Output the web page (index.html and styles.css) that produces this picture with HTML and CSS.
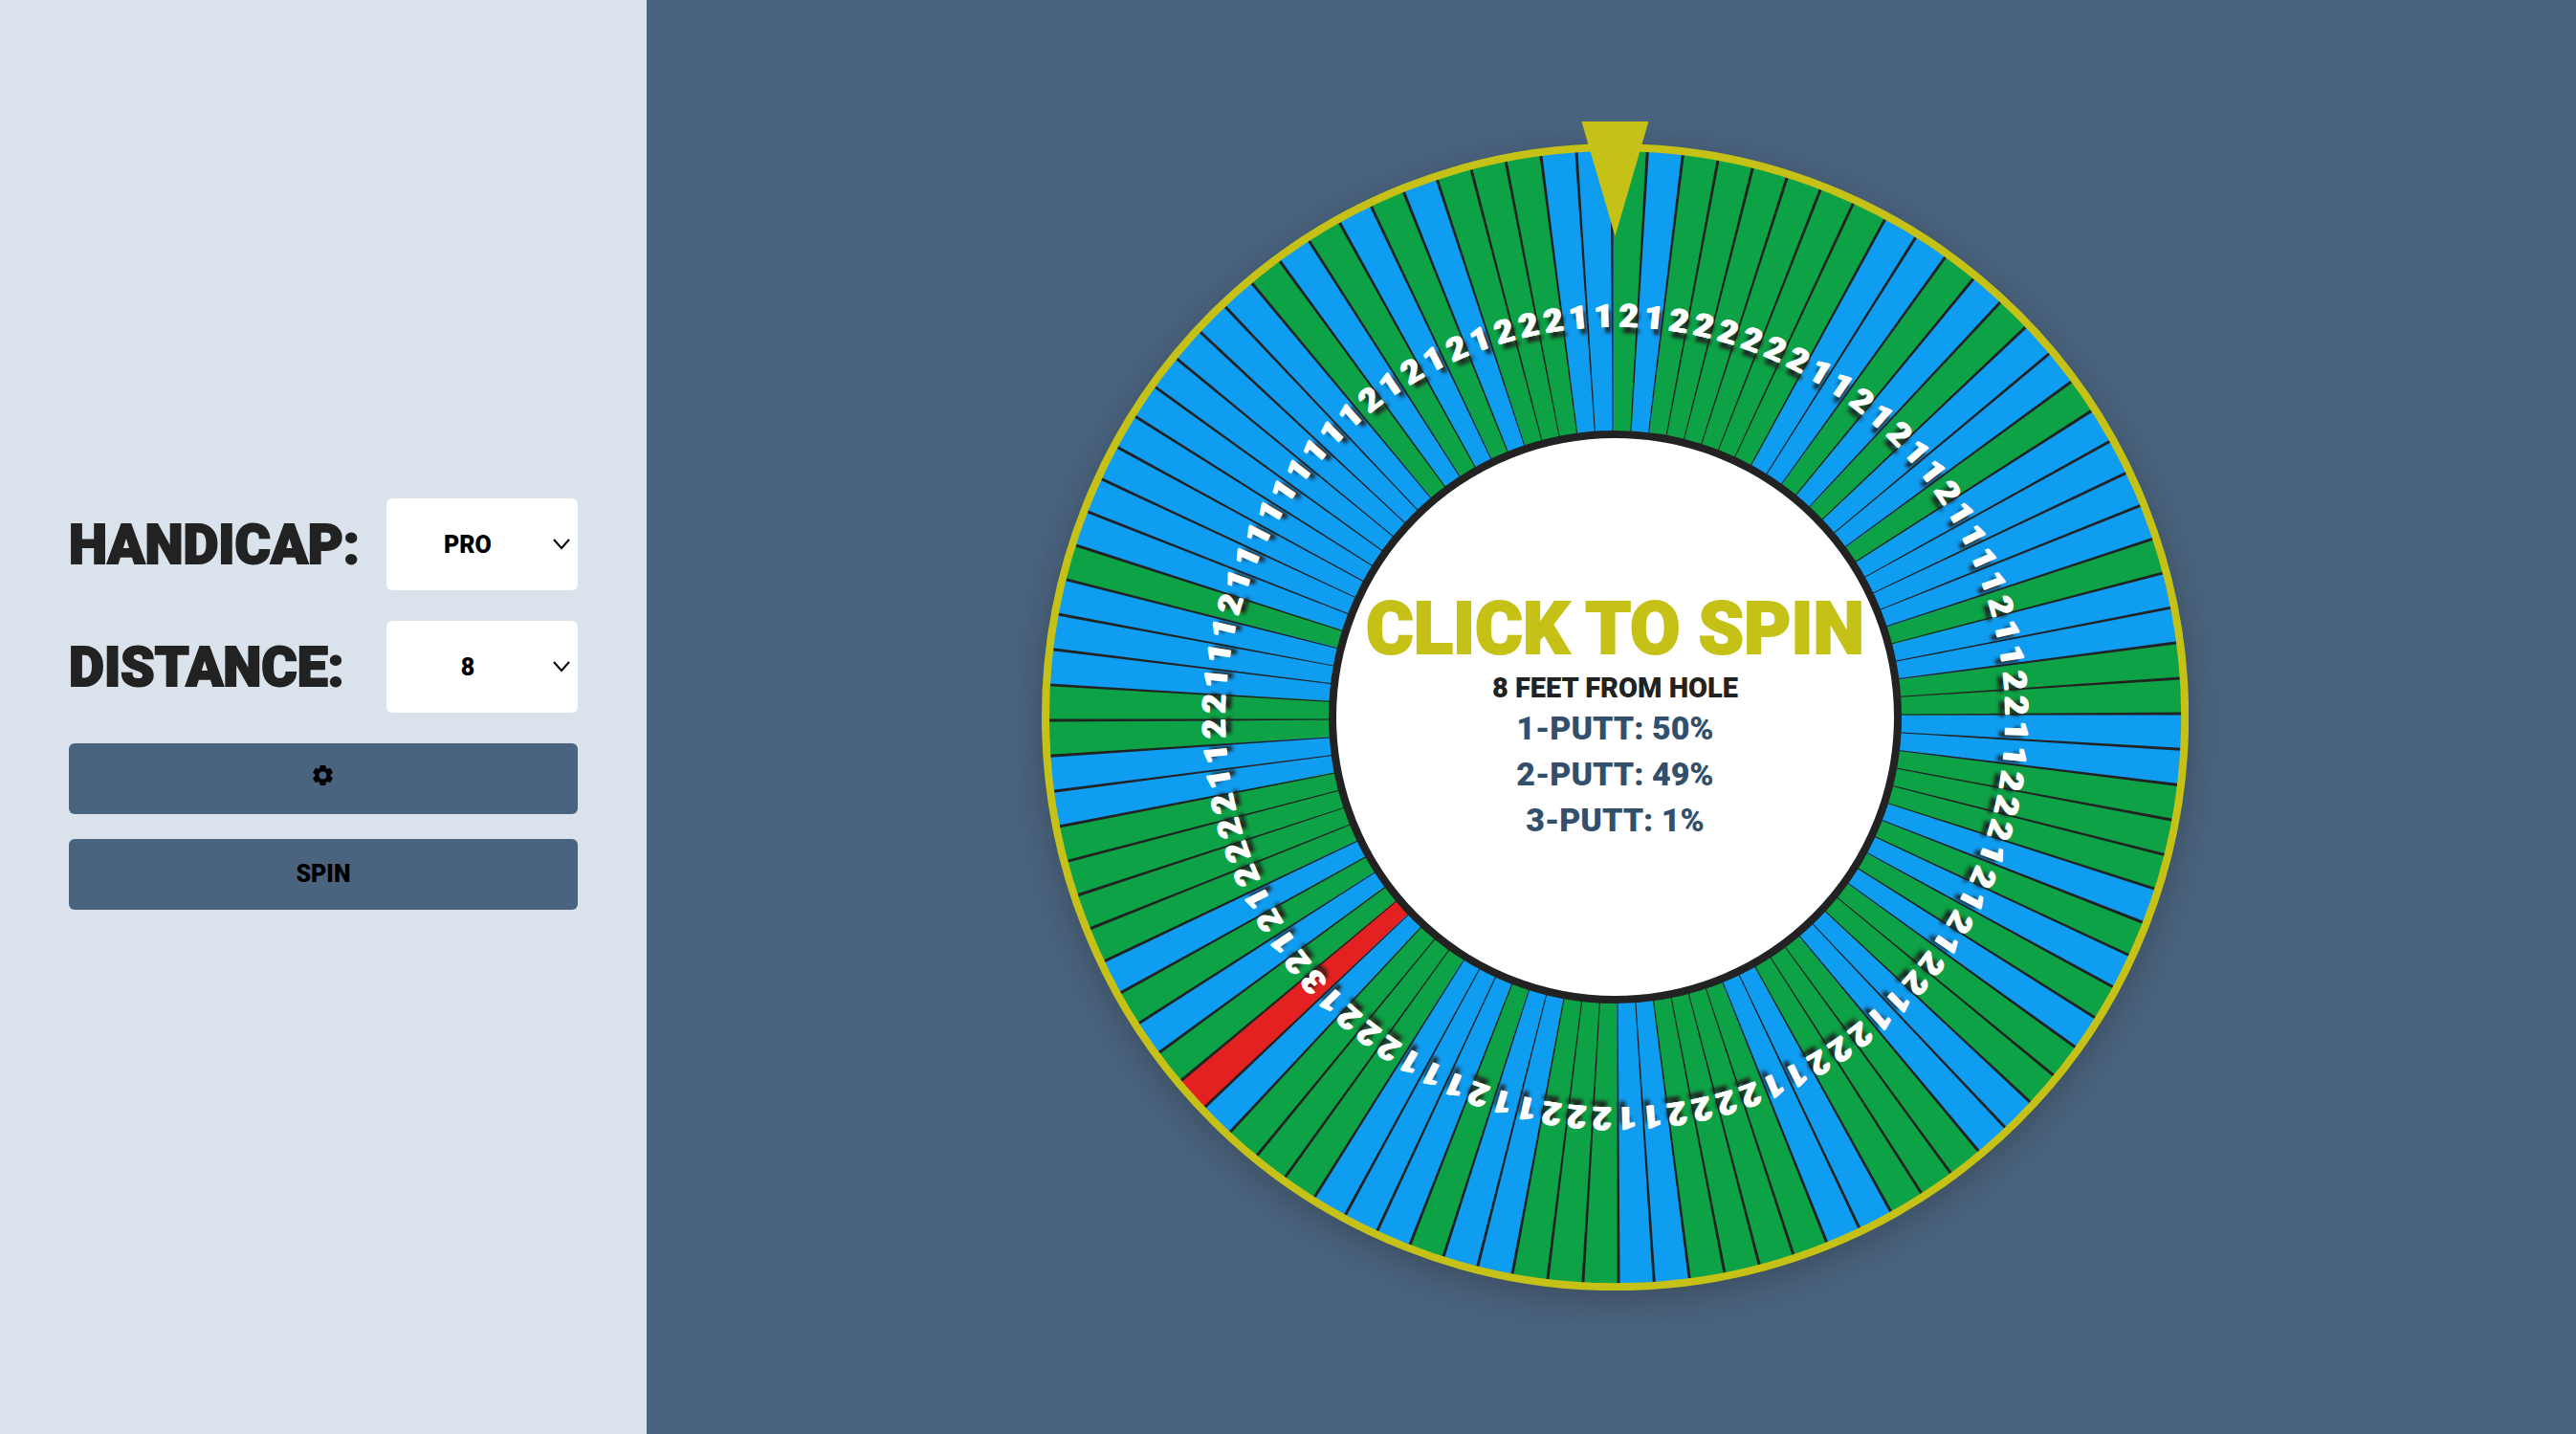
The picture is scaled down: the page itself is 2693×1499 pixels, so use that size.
FILE: index.html
```html
<!DOCTYPE html>
<html lang="en">
<head>
  <meta charset="utf-8">
  <meta name="viewport" content="width=device-width, initial-scale=1">
  <title>Putt Wheel</title>
  <link rel="stylesheet" href="styles.css">
</head>
<body>
  <div class="app">
    <aside class="sidebar">
      <form class="controls">
        <div class="field">
          <label class="field-label" for="handicap">HANDICAP:</label>
          <div class="select-box">
            <select class="select" id="handicap">
              <option selected>PRO</option>
              <option>SCRATCH</option>
            </select>
            <svg class="chevron" viewBox="0 0 18 12" aria-hidden="true"><path d="M1 1l8 9 8-9"/></svg>
          </div>
        </div>
        <div class="field">
          <label class="field-label" for="distance">DISTANCE:</label>
          <div class="select-box">
            <select class="select" id="distance">
              <option selected>8</option>
              <option>9</option>
            </select>
            <svg class="chevron" viewBox="0 0 18 12" aria-hidden="true"><path d="M1 1l8 9 8-9"/></svg>
          </div>
        </div>
        <div class="actions">
          <button class="action action-settings" type="button" aria-label="Settings">
            <svg class="gear" viewBox="0 0 24 24" aria-hidden="true"><path d="M19.14 12.94c.04-.3.06-.61.06-.94 0-.32-.02-.64-.07-.94l2.03-1.58a.49.49 0 0 0 .12-.61l-1.92-3.32a.488.488 0 0 0-.59-.22l-2.39.96c-.5-.38-1.03-.7-1.62-.94l-.36-2.54a.484.484 0 0 0-.48-.41h-3.84c-.24 0-.43.17-.47.41l-.36 2.54c-.59.24-1.13.57-1.62.94l-2.39-.96c-.22-.08-.47 0-.59.22L2.74 8.87c-.12.21-.08.47.12.61l2.03 1.58c-.05.3-.09.63-.09.94s.02.64.07.94l-2.03 1.58a.49.49 0 0 0-.12.61l1.92 3.32c.12.22.37.29.59.22l2.39-.96c.5.38 1.03.7 1.62.94l.36 2.54c.05.24.24.41.48.41h3.84c.24 0 .44-.17.47-.41l.36-2.54c.59-.24 1.13-.56 1.62-.94l2.39.96c.22.08.47 0 .59-.22l1.92-3.32c.12-.22.07-.47-.12-.61l-2.01-1.58zM12 16.3c-2.37 0-4.3-1.93-4.3-4.3s1.93-4.3 4.3-4.3 4.3 1.93 4.3 4.3-1.93 4.3-4.3 4.3z"/></svg>
          </button>
          <button class="action" type="button">SPIN</button>
        </div>
      </form>
    </aside>
    <main class="stage">
      <div class="wheel">
        <svg class="segments" id="segments" viewBox="-600 -600 1200 1200" role="img" aria-label="Putt wheel"></svg>
        <button class="hub" type="button">
          <span class="hub-title">CLICK TO SPIN</span>
          <span class="hub-distance">8 FEET FROM HOLE</span>
          <span class="hub-odds">1-PUTT: 50%</span>
          <span class="hub-odds">2-PUTT: 49%</span>
          <span class="hub-odds">3-PUTT: 1%</span>
        </button>
        <div class="pointer"></div>
      </div>
    </main>
  </div>
  <script src="wheel.js"></script>
</body>
</html>
```
FILE: styles.css
```css
:root {
  --gold: #c5c116;
  --slate: #4a647f;
  --ink: #222;
}

* {
  box-sizing: border-box;
}

body {
  margin: 0;
  font-family: Roboto, "Liberation Sans", sans-serif;
  font-weight: 900;
  color: var(--ink);
}

.app {
  display: flex;
  min-height: 100vh;
}

.sidebar {
  flex: 0 0 25.1%;
  display: flex;
  align-items: center;
  padding: 0 72px 28px;
  background: #dae2eb;
}

.controls {
  flex: 1;
  display: grid;
  gap: 32px;
}

.field {
  display: flex;
  align-items: center;
  justify-content: space-between;
}

.field-label {
  padding-top: 2px;
  font-size: 57px;
  line-height: 64px;
  -webkit-text-stroke: 2px currentColor;
}

.select-box {
  display: grid;
  align-items: center;
  width: 200px;
}

.select,
.chevron {
  grid-area: 1 / 1;
}

.select {
  appearance: none;
  width: 100%;
  height: 96px;
  padding: 2px 30px 0 0;
  border: 0;
  border-radius: 6px;
  background: #fff;
  color: #000;
  font: inherit;
  font-size: 25px;
  text-align: center;
  text-align-last: center;
}

.chevron {
  justify-self: end;
  width: 18px;
  height: 12px;
  margin-right: 8px;
  fill: none;
  stroke: #000;
  stroke-width: 2;
  pointer-events: none;
}

.actions {
  display: grid;
  gap: 26px;
}

.action {
  display: flex;
  align-items: center;
  justify-content: center;
  height: 74px;
  padding: 0;
  border: 0;
  border-radius: 6px;
  background: var(--slate);
  color: #000;
  font: inherit;
  font-size: 25px;
  cursor: pointer;
}

.action-settings {
  padding-bottom: 6px;
}

.gear {
  width: 25px;
  height: 25px;
  stroke: #000;
  stroke-width: 1;
}

.stage {
  flex: 1;
  display: flex;
  align-items: center;
  justify-content: center;
  padding-left: 8px;
  background: var(--slate);
}

.wheel {
  position: relative;
  display: grid;
  place-items: center;
  width: 80vh;
  height: 80vh;
  border-radius: 50%;
  box-shadow: 0 10px 40px rgba(34, 34, 34, 0.35);
}

.segments,
.hub {
  grid-area: 1 / 1;
}

.segments {
  width: 100%;
  height: 100%;
}

.wedge-1 {
  fill: #0f9df2;
}

.wedge-2 {
  fill: #0da245;
}

.wedge-3 {
  fill: #e42121;
}

.divider {
  fill: var(--ink);
}

.rim {
  fill: none;
  stroke: var(--gold);
  stroke-width: 8;
}

.digit {
  fill: #fff;
  font-size: 34px;
  text-anchor: middle;
  text-shadow: 1px 0 #fff, -1px 0 #fff, 3px 6px 4px var(--ink);
}

.hub {
  display: flex;
  flex-direction: column;
  align-items: center;
  justify-content: center;
  width: 50%;
  height: 50%;
  padding: 0 0 6px;
  border: 8px solid var(--ink);
  border-radius: 50%;
  background: #fff;
  color: var(--ink);
  font: inherit;
  white-space: nowrap;
  cursor: pointer;
}

.hub-title {
  color: var(--gold);
  font-size: 76px;
  line-height: 88px;
  -webkit-text-stroke: 2px currentColor;
}

.hub-distance {
  font-size: 29px;
  line-height: 36px;
}

.hub-odds {
  color: #324f6b;
  font-size: 34px;
  line-height: 48px;
}

.pointer {
  position: absolute;
  top: -23px;
  left: calc(50% - 35px);
  width: 70px;
  height: 120px;
  background: var(--gold);
  clip-path: polygon(0 0, 100% 0, 50% 100%);
}
```
FILE: wheel.js
```js
// Putts for each of the 100 wedges, clockwise from the top.
const putts =
  "2122222211212112111121122" +
  "1122212121221122211222211" +
  "2221121112221321212222112" +
  "2111211111111121212122211";

const svgNs = "http://www.w3.org/2000/svg";
const wheel = document.getElementById("segments");
const step = 360 / putts.length;
const radius = 593;

function add(name, attributes) {
  const node = document.createElementNS(svgNs, name);
  for (const [key, value] of Object.entries(attributes)) {
    node.setAttribute(key, value);
  }
  wheel.append(node);
  return node;
}

const half = (step * Math.PI) / 360 + 0.001;
const edgeX = radius * Math.sin(half);
const edgeY = -radius * Math.cos(half);

[...putts].forEach((count, i) => {
  add("path", {
    class: `wedge-${count}`,
    d: `M0 0L${-edgeX} ${edgeY}A${radius} ${radius} 0 0 1 ${edgeX} ${edgeY}Z`,
    transform: `rotate(${(i + 0.5) * step - 0.25})`,
  });
});

[...putts].forEach((count, i) => {
  add("path", {
    class: "divider",
    d: "M-3 -296L-2 -296L-2 -593L-5 -593Z",
    transform: `rotate(${i * step})`,
  });
});

[...putts].forEach((count, i) => {
  add("text", {
    class: "digit",
    x: 1,
    y: -408,
    transform: `rotate(${(i + 0.5) * step})`,
  }).textContent = count;
});

add("circle", { class: "rim", r: 596 });
```
